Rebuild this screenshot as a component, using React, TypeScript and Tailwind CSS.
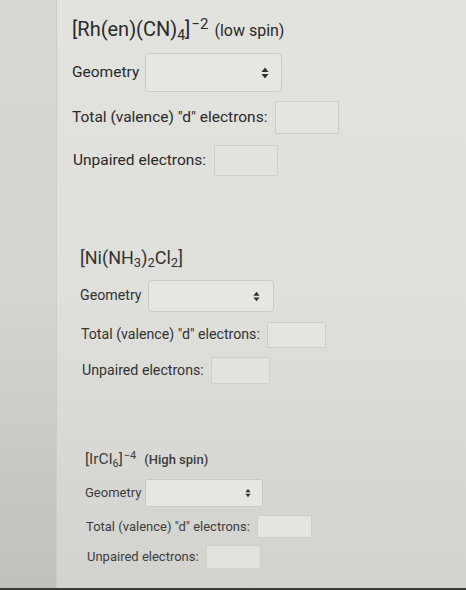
import React from 'react';

interface SectionStyle {
  wrap: string;
  title: string;
  label: string;
  rowGeo: string;
  select: string;
  arrow: string;
  total: string;
  unpaired: string;
  gapGeo: string;
  gapBox: string;
  rowTotal: string;
  rowUnpaired: string;
}

const sections: { title: React.ReactNode; style: SectionStyle }[] = [
  {
    title: (
      <>
        [Rh(en)(CN)<sub className="text-[14px]">4</sub>]<sup className="text-[15px] ml-[1px]">−2</sup>
        <span className="ml-[6px] text-[16px]">(low spin)</span>
      </>
    ),
    style: {
      wrap: 'pl-[15px] pt-[16px] text-[#2a2a2a]',
      title: 'text-[20px] leading-[26px]',
      label: 'text-[15.5px]',
      rowGeo: 'mt-[9px]',
      select: 'h-[39px] w-[137px] rounded-[4px] pr-[12px]',
      arrow: 'w-[8px] h-[12px]',
      total: 'h-[33px] w-[64px]',
      unpaired: 'h-[31px] w-[64px]',
      gapGeo: 'gap-[6px]',
      gapBox: 'gap-[8px]',
      rowTotal: 'mt-[9px]',
      rowUnpaired: 'mt-[11px] pl-[1px]',
    },
  },
  {
    title: (
      <>
        [Ni(NH<sub className="text-[13px]">3</sub>)<sub className="text-[13px]">2</sub>Cl<sub className="text-[13px]">2</sub>]
      </>
    ),
    style: {
      wrap: 'pl-[23px] pt-[70px] text-[#333333]',
      title: 'text-[18px] leading-[24px]',
      label: 'text-[14.2px]',
      rowGeo: 'mt-[10px]',
      select: 'h-[32px] w-[126px] rounded-[4px] pr-[13px]',
      arrow: 'w-[7px] h-[11px]',
      total: 'h-[26px] w-[59px]',
      unpaired: 'h-[27px] w-[59px]',
      gapGeo: 'gap-[6px]',
      gapBox: 'gap-[7px]',
      rowTotal: 'mt-[10px] pl-[1px]',
      rowUnpaired: 'mt-[9px] pl-[2px]',
    },
  },
  {
    title: (
      <>
        [IrCl<sub className="text-[11px]">6</sub>]<sup className="text-[11px] ml-[1px]">−4</sup>
        <span className="ml-[8px] text-[13px] font-medium">(High spin)</span>
      </>
    ),
    style: {
      wrap: 'pl-[28px] pt-[64px] text-[#3d3d3d]',
      title: 'text-[15.5px] leading-[22px]',
      label: 'text-[13px]',
      rowGeo: 'mt-[8px]',
      select: 'h-[28px] w-[118px] rounded-[3px] pr-[11px]',
      arrow: 'w-[6px] h-[10px]',
      total: 'h-[23px] w-[55px]',
      unpaired: 'h-[24px] w-[55px]',
      gapGeo: 'gap-[4px]',
      gapBox: 'gap-[7px]',
      rowTotal: 'mt-[8px] pl-[1px]',
      rowUnpaired: 'mt-[7px] pl-[2px]',
    },
  },
];

const UpDown: React.FC<{ className: string }> = ({ className }) => (
  <svg viewBox="0 0 8 12" className={className}>
    <path d="M4 0.5 L7.5 5 L0.5 5 Z" fill="#2f2f2f" />
    <path d="M4 11.5 L7.5 7 L0.5 7 Z" fill="#2f2f2f" />
  </svg>
);

const Question: React.FC<{ title: React.ReactNode; s: SectionStyle }> = ({ title, s }) => (
  <div className={`flex flex-col ${s.wrap}`}>
    <div className={s.title}>{title}</div>
    <div className={`flex items-center ${s.gapGeo} ${s.rowGeo}`}>
      <span className={s.label}>Geometry</span>
      <div className={`flex items-center justify-end border border-[#c9c9c5] bg-[#e6e6e2] ${s.select}`}>
        <UpDown className={s.arrow} />
      </div>
    </div>
    <div className={`flex items-center ${s.gapBox} ${s.rowTotal}`}>
      <span className={s.label}>Total (valence) "d" electrons:</span>
      <div className={`border border-[#cdcdc9] bg-[#e4e4e0] ${s.total}`} />
    </div>
    <div className={`flex items-center ${s.gapBox} ${s.rowUnpaired}`}>
      <span className={s.label}>Unpaired electrons:</span>
      <div className={`border border-[#cfcfcb] bg-[#e2e2de] ${s.unpaired}`} />
    </div>
  </div>
);

export default function App() {
  return (
    <div className="flex flex-col w-[466px] h-[590px] overflow-hidden font-['Roboto',sans-serif]">
      <div className="flex flex-1 min-h-0">
        <div className="w-[56px] shrink-0 bg-linear-to-b from-[#d8d8d4] via-[#d4d4d0] to-[#c0c0bd]" />
        <div className="flex-1 flex flex-col border-l border-[#cbcbc7] bg-linear-to-b from-[#e2e2de] via-[#dfdfdb] to-[#d2d2ce]">
          {sections.map((sec, i) => (
            <Question key={i} title={sec.title} s={sec.style} />
          ))}
        </div>
      </div>
      <div className="h-[2px] bg-[#3a3a3a]" />
    </div>
  );
}
